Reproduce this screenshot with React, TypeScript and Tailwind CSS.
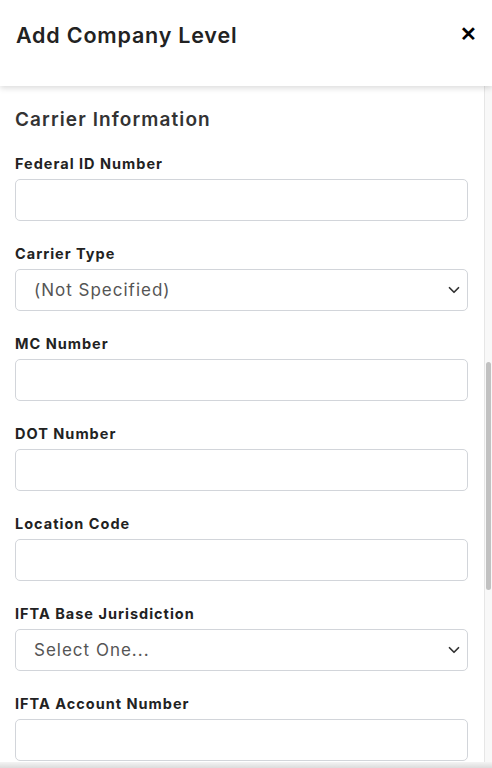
import { ChevronDown } from "lucide-react";

type Field = { label: string; kind: "input" | "select"; placeholder?: string };

const fields: Field[] = [
  { label: "Federal ID Number", kind: "input" },
  { label: "Carrier Type", kind: "select", placeholder: "(Not Specified)" },
  { label: "MC Number", kind: "input" },
  { label: "DOT Number", kind: "input" },
  { label: "Location Code", kind: "input" },
  { label: "IFTA Base Jurisdiction", kind: "select", placeholder: "Select One..." },
  { label: "IFTA Account Number", kind: "input" },
];

function FormField({ field }: { field: Field }) {
  return (
    <div className="flex flex-col">
      <label className="text-[14.5px] font-bold text-[#222] tracking-[1px] leading-[18px] mb-[6px]">{field.label}</label>
      {field.kind === "input" ? (
        <div className="h-[42px] rounded-[5px] border border-[#d2d5da] bg-white" />
      ) : (
        <div className="h-[42px] rounded-[5px] border border-[#d2d5da] bg-white flex items-center justify-between pl-[18px] pr-[4px]">
          <span className="text-[17px] text-[#555] tracking-[1px] mt-[2px]">{field.placeholder}</span>
          <ChevronDown size={18} strokeWidth={2.3} className="text-[#333]" />
        </div>
      )}
    </div>
  );
}

export default function App() {
  return (
    <div className="w-[492px] h-[768px] bg-white flex flex-col overflow-hidden" style={{ fontFamily: "Inter, 'Noto Sans', sans-serif" }}>
      <div className="h-[86px] shrink-0 flex items-start justify-between pl-[16px] pr-[15px] pt-[19px] shadow-[0_2px_6px_rgba(0,0,0,0.15)] relative z-10">
        <h1 className="text-[21.5px] font-semibold text-[#222] tracking-[0.8px]">Add Company Level</h1>
        <span className="text-[20px] font-bold text-black leading-[28px] mt-[1px]">✕</span>
      </div>
      <div className="flex flex-1 min-h-0">
        <div className="flex-1 flex flex-col pl-[15px] pr-[16px] pt-[22px]">
          <h2 className="text-[19px] font-semibold text-[#333] tracking-[1.1px] leading-[24px] mb-[23px]">Carrier Information</h2>
          <div className="flex flex-col gap-[24px]">
            {fields.map((f) => (
              <FormField key={f.label} field={f} />
            ))}
          </div>
        </div>
        <div className="w-[8px] shrink-0 border-l border-[#e6e6e6] bg-[#f8f8f8] flex flex-col">
          <div className="mt-[276px] h-[228px] mx-[1px] rounded-[3px] bg-[#c1c1c1]" />
        </div>
      </div>
      <div className="h-[6px] shrink-0 bg-gradient-to-b from-[#f4f4f4] to-[#dcdcdc]" />
    </div>
  );
}
